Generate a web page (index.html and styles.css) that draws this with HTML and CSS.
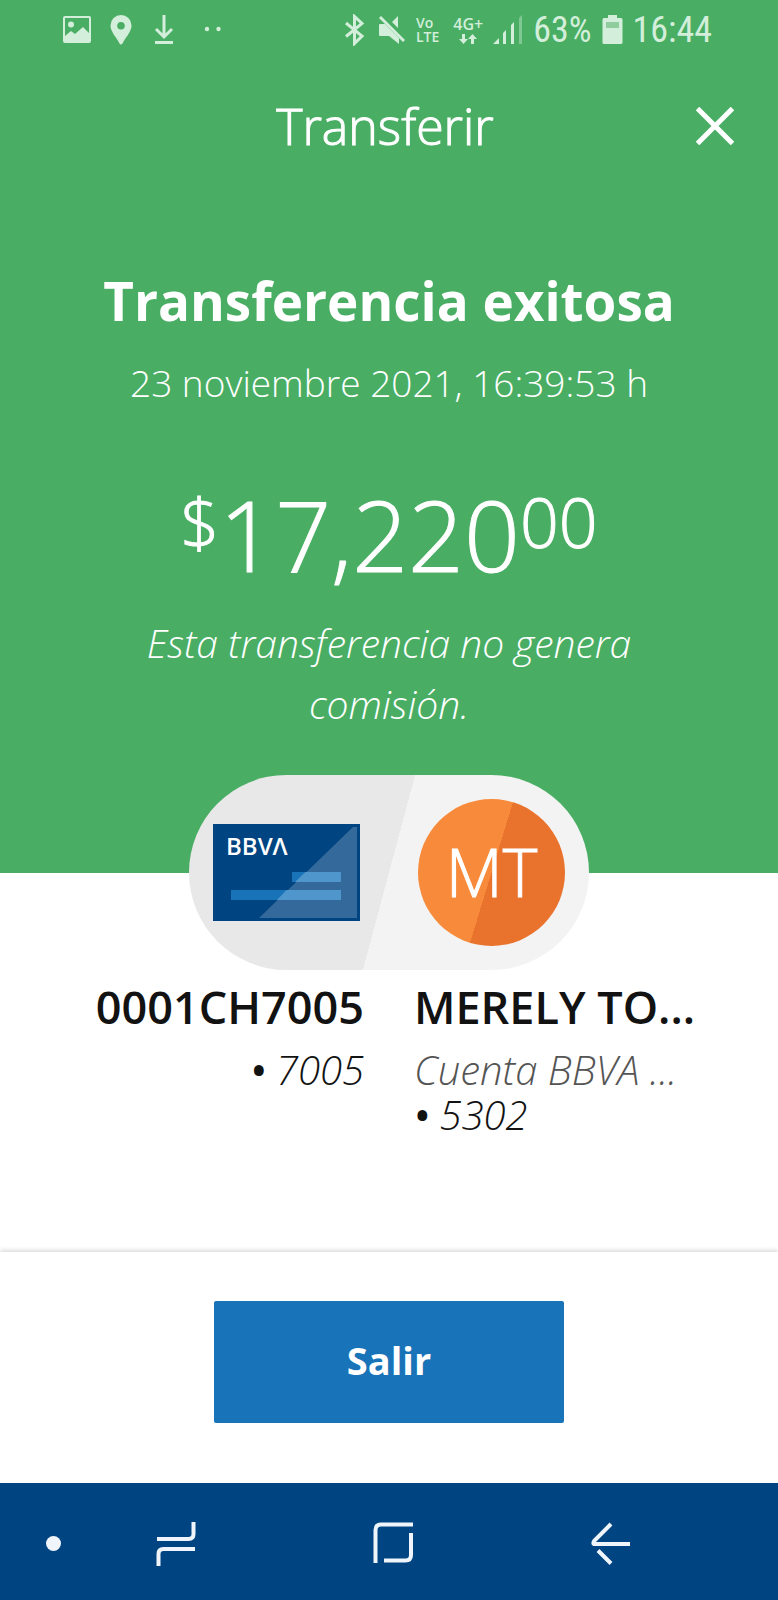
FILE: index.html
```html
<!DOCTYPE html>
<html lang="es">
<head>
<meta charset="utf-8">
<meta name="viewport" content="width=device-width, initial-scale=1">
<title>Transferir</title>
<link rel="stylesheet" href="styles.css">
</head>
<body>
<div class="screen">
  <section class="hero">
    <div class="status">
      <div class="status-left">
        <svg width="30" height="30" viewBox="0 0 30 30"><path fill-rule="evenodd" d="M3 1h24a2 2 0 0 1 2 2v23a2 2 0 0 1-2 2H3a2 2 0 0 1-2-2V3a2 2 0 0 1 2-2zM3 3v18l6-5 4 3 8-7 6 6V3z"/><circle cx="9" cy="9.500" r="3"/></svg>
        <svg width="22" height="30" viewBox="0 0 22 30"><path fill-rule="evenodd" d="M11 0a10.500 10.500 0 0 1 10.500 10.500C21.500 17 15 23 12.500 28.500a1.700 1.700 0 0 1-3 0C7 23 .5 17 .5 10.500A10.500 10.500 0 0 1 11 0zm0 7a3.800 3.800 0 1 0 0 7.600A3.800 3.800 0 0 0 11 7z"/></svg>
        <svg class="s-down" width="20" height="30" viewBox="0 0 20 30"><path class="line" d="M10 0v22M2 14l8 8 8-8M1 27.500h18"/></svg>
        <svg class="s-dots" width="18" height="30" viewBox="0 0 18 30"><circle cx="3" cy="14" r="2.200"/><circle cx="14.500" cy="14" r="2.200"/></svg>
      </div>
      <div class="status-right">
        <svg class="s-bluetooth" width="20" height="32" viewBox="0 0 20 32"><path class="line" d="M1 9l16 13-7.500 7.500v-27L17 9.500 1 22.500"/></svg>
        <svg width="27" height="30" viewBox="0 0 27 30"><path d="M1 9h5l14 14v6l-10-8H1a1 1 0 0 1-1-1V10a1 1 0 0 1 1-1zM19 1v12l-6-6z"/><path class="line" d="M1 2l24 24"/></svg>
        <div class="volte"><span>Vo</span><span>LTE</span></div>
        <div class="network"><span>4G+</span>
          <svg width="18" height="10" viewBox="0 0 18 10"><path d="M3 0h3v5h3L4.500 10 0 5h3zM12 10h3V5h3l-4.500-5L9 5h3z"/></svg>
        </div>
        <svg width="30" height="30" viewBox="0 0 30 30"><path d="M0 29l6-6v6zM10 29V18l3-3v14zM18 29V10l3-3v22z"/><path opacity=".4" d="M26 29V3l3-3v29z"/></svg>
        <span>63%</span>
        <svg width="21" height="30" viewBox="0 0 21 30"><path d="M6 0h9v3h4a1.500 1.500 0 0 1 1.500 1.500v23A1.500 1.500 0 0 1 19 29H2a1.500 1.500 0 0 1-1.500-1.500v-23A1.500 1.500 0 0 1 2 3h4z"/><path class="drained" d="M4 7h13v6H4z"/></svg>
        <span>16:44</span>
      </div>
    </div>
    <header class="bar">
      <h1>Transferir</h1>
      <button class="close" type="button" aria-label="Cerrar"><svg width="38" height="38" viewBox="0 0 38 38"><path d="M1.500 1.500l35 35M36.500 1.500l-35 35"/></svg></button>
    </header>
    <div class="summary">
      <h2>Transferencia exitosa</h2>
      <p class="date">23 noviembre 2021, 16:39:53 h</p>
      <p class="amount"><span class="minor">$</span><span>17,220</span><span class="minor">00</span></p>
      <p class="note">Esta transferencia no genera comisión.</p>
    </div>
  </section>
  <main class="parties">
    <div class="pill">
      <svg class="card" width="147" height="97" viewBox="0 0 147 97">
        <path fill="#004481" d="M0 0h147v97H0z"/>
        <path fill="#1973b8" d="M79 48h49v10H79zM18 66h110v10H18z"/>
        <path fill="#336a9b" d="M140 3h4v91H46z"/>
        <path fill="#4f96cc" d="M92.500 48H128v10H82zM73.500 66H128v10H64z"/>
        <text x="13" y="31">BBVΛ</text>
      </svg>
      <div class="avatar">MT</div>
    </div>
    <div class="accounts">
      <div class="from">
        <strong>0001CH7005</strong>
        <em><b>•</b> 7005</em>
      </div>
      <div class="to">
        <strong>MERELY TO...</strong>
        <em class="muted">Cuenta BBVA ...</em>
        <em><b>•</b> 5302</em>
      </div>
    </div>
  </main>
  <footer class="actions"><button class="exit" type="button">Salir</button></footer>
  <nav class="nav">
    <span class="dot"></span>
    <button type="button" aria-label="Recientes"><svg width="40" height="44" viewBox="0 0 40 44"><path d="M37.500 0v12q0 5-5 5H1M2.500 44V32q0-5 5-5H39"/></svg></button>
    <button type="button" aria-label="Inicio"><svg width="40" height="44" viewBox="0 0 40 44"><path d="M2.500 41V8q0-5.500 5.500-5.500h32M38 11v22q0 5.500-5.500 5.500H11"/></svg></button>
    <button type="button" aria-label="Atrás"><svg width="40" height="44" viewBox="0 0 40 44"><path d="M20 2L3.500 18.500q-2.500 3.500.5 3.500h35M7 28.500l13 13"/></svg></button>
  </nav>
</div>
</body>
</html>
```
FILE: styles.css
```css
* { box-sizing: border-box; }
body {
  margin: 0;
  background: #fff;
  color: #121212;
  font-family: "Open Sans", "Noto Sans", sans-serif;
  font-weight: 300;
}
h1, h2, p { margin: 0; }
svg { display: block; flex: none; }
button { border: 0; padding: 0; background: none; font-family: inherit; cursor: pointer; }
.screen { display: flex; flex-direction: column; min-height: 100vh; }

.hero { background: #49ae64; color: #fff; padding-bottom: 139px; }
.status {
  display: flex;
  justify-content: space-between;
  align-items: center;
  height: 60px;
  padding: 0 66px 0 62px;
  color: #d3eeda;
}
.status svg { fill: currentColor; }
.status .line { fill: none; stroke: currentColor; stroke-width: 3; }
.status .drained { fill: #8fcd9f; }
.status-left, .status-right { display: flex; align-items: center; }
.status-left { gap: 18px; }
.s-down { margin-left: 4px; }
.s-dots { margin-left: 12px; }
.status-right { gap: 10px; font-family: "Roboto Condensed", Roboto, sans-serif; font-size: 36px; line-height: 40px; font-weight: 400; }
.s-bluetooth, .volte { margin-right: 4px; }
.volte, .network {
  display: flex;
  flex-direction: column;
  font: 600 14px/14px "Open Sans", sans-serif;
}
.network { align-items: center; gap: 3px; font-size: 16px; }

.bar { display: grid; grid-template-columns: 1fr auto 1fr; align-items: center; height: 132px; padding: 0 44px 0 36px; }
.bar h1 { grid-column: 2; font-size: 50px; font-weight: 300; line-height: 64px; }
.bar h1, .amount, .avatar { -webkit-text-stroke: 1px currentColor; }
.close { justify-self: end; }
.close svg { fill: none; stroke: #fff; stroke-width: 5; }

.summary { padding: 77px 96px 0; text-align: center; }
.summary h2 { display: flex; justify-content: center; font-size: 53px; font-weight: 700; line-height: 64px; white-space: nowrap; }
.date { margin-top: 26px; font-size: 37px; line-height: 48px; }
.amount { display: flex; justify-content: center; margin-top: 66px; font-size: 98px; line-height: 122px; }
.minor { font-size: 68px; line-height: 98px; }
.note { margin-top: 17px; font-size: 39px; line-height: 61px; font-style: italic; }

.parties { flex: 1; }
.pill {
  display: flex;
  align-items: center;
  justify-content: space-between;
  width: 400px;
  height: 195px;
  margin: -98px auto 0;
  padding: 0 24px;
  border-radius: 98px;
  background: linear-gradient(105deg, #e8e8e8 50%, #f3f3f3 50%);
}
.card text { fill: #fff; font: 600 24px "Open Sans", sans-serif; }
.avatar {
  width: 147px;
  height: 147px;
  border-radius: 50%;
  background: linear-gradient(107deg, #f78b3b 50%, #e9722d 50%);
  color: #fff;
  font-size: 66px;
  line-height: 144px;
  text-align: center;
}
.accounts { display: grid; grid-template-columns: 1fr 1fr; gap: 50px; padding: 9px 0 64px; }
.from, .to { display: flex; flex-direction: column; white-space: nowrap; }
.from { align-items: flex-end; }
.to { align-items: flex-start; }
.accounts strong { margin-bottom: 12px; font-size: 45px; line-height: 56px; font-weight: 600; }
.accounts em { font-size: 40px; line-height: 45px; }
.accounts b { font-weight: 600; }
.accounts .muted { color: #555; }

.actions { display: flex; justify-content: center; padding: 49px 24px 60px; box-shadow: 0 -2px 4px rgba(0, 0, 0, .14); }
.exit { width: 350px; height: 122px; padding-bottom: 4px; border-radius: 2px; background: #1973b8; color: #fff; font-size: 38px; font-weight: 700; }

.nav { display: grid; grid-template-columns: 106fr 140fr 294fr 142fr 96fr; align-items: center; justify-items: center; height: 117px; padding-top: 4px; background: #004481; }
.dot { width: 15px; height: 15px; border-radius: 50%; background: #f0f5fb; }
.nav svg { fill: none; stroke: #f0f5fb; stroke-width: 4; }
```
